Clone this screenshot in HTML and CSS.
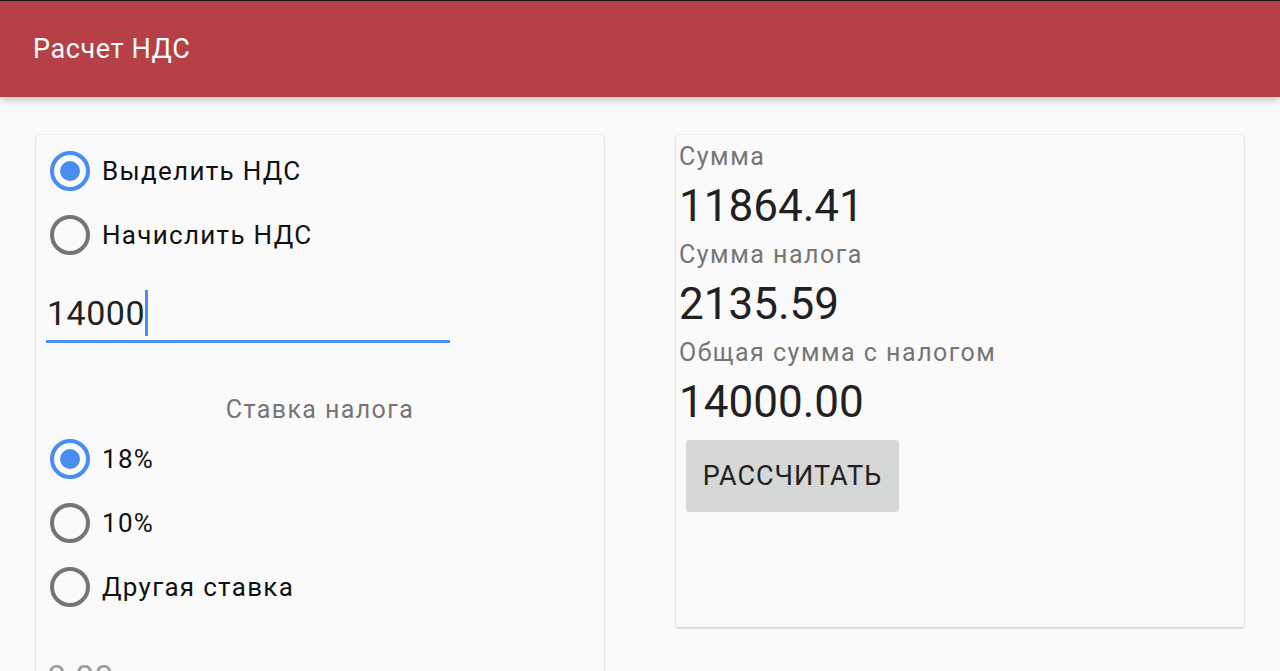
FILE: index.html
```html
<!DOCTYPE html>
<html lang="ru">
<head>
<meta charset="utf-8">
<title>Расчет НДС</title>
<link rel="stylesheet" href="styles.css">
</head>
<body>
<div class="topline"></div>
<header class="appbar"><h1 class="title">Расчет НДС</h1></header>
<main class="content">
  <section class="card left">
    <div class="radio-row"><span class="radio checked"></span><span class="radio-label">Выделить НДС</span></div>
    <div class="radio-row"><span class="radio"></span><span class="radio-label">Начислить НДС</span></div>
    <div class="field"><span class="field-text">14000</span><span class="cursor"></span></div>
    <div class="section-label">Ставка налога</div>
    <div class="radio-row"><span class="radio checked"></span><span class="radio-label">18%</span></div>
    <div class="radio-row"><span class="radio"></span><span class="radio-label">10%</span></div>
    <div class="radio-row"><span class="radio"></span><span class="radio-label">Другая ставка</span></div>
    <div class="other-rate">0.00</div>
  </section>
  <section class="card right">
    <div class="label">Сумма</div>
    <div class="value">11864.41</div>
    <div class="label">Сумма налога</div>
    <div class="value">2135.59</div>
    <div class="label">Общая сумма с налогом</div>
    <div class="value">14000.00</div>
    <button class="btn">РАССЧИТАТЬ</button>
  </section>
</main>
</body>
</html>
```
FILE: styles.css
```css
html, body { margin: 0; padding: 0; }
body {
  width: 1280px;
  height: 671px;
  overflow: hidden;
  background: #fafafa;
  font-family: Roboto, "Noto Sans", sans-serif;
  color: #212121;
}
.topline { height: 1px; background: #1a1a1a; }
.appbar {
  height: 96px;
  background: #b64047;
  display: flex;
  align-items: center;
  padding-left: 33px;
  box-shadow: 0 3px 8px rgba(0,0,0,0.22);
  position: relative;
  z-index: 1;
}
.title { margin: 0; font-weight: 400; font-size: 27px; letter-spacing: 0.6px; color: #fff; }
.content {
  display: flex;
  gap: 72px;
  padding: 38px 36px 0 36px;
  align-items: flex-start;
}
.card {
  width: 568px;
  background: #fafafa;
  border-radius: 3px;
  box-shadow: 0 1px 3px rgba(0,0,0,0.22), 0 0 1px rgba(0,0,0,0.12);
}
.left { height: 600px; padding-top: 4px; box-sizing: border-box; }
.radio-row {
  height: 64px;
  display: flex;
  align-items: center;
  padding-left: 14px;
}
.radio {
  width: 40px; height: 40px;
  box-sizing: border-box;
  border: 4px solid #757575;
  border-radius: 50%;
  display: flex; align-items: center; justify-content: center;
}
.radio.checked { border-color: #4a8df2; }
.radio.checked::after {
  content: "";
  width: 20px; height: 20px;
  border-radius: 50%;
  background: #4a8df2;
}
.radio-label { margin-left: 12px; font-size: 26px; letter-spacing: 1.3px; color: #111; }
.field {
  margin: 18px 0 0 10px;
  width: 404px;
  height: 55px;
  border-bottom: 3px solid #4a8df2;
  display: flex;
  align-items: center;
}
.field-text { font-size: 34px; letter-spacing: 0.5px; color: #222; margin-left: 1px; }
.cursor { width: 3px; height: 46px; background: #4a8df2; }
.section-label {
  text-align: center;
  font-size: 25px;
  letter-spacing: 1.4px;
  color: #757575;
  margin-top: 52px;
  margin-bottom: 3px;
}
.other-rate { margin: 38px 0 0 11px; font-size: 34px; color: #9e9e9e; }
.right { height: 492px; padding: 2px 3px 0 3px; box-sizing: border-box; }
.label { font-size: 25px; letter-spacing: 1.5px; color: #757575; line-height: 40px; }
.value { font-size: 44px; line-height: 58px; color: #212121; }
.btn {
  margin: 9px 0 0 7px;
  width: 213px;
  height: 72px;
  background: #d6d7d7;
  border: none;
  border-radius: 3px;
  font-family: Roboto, "Noto Sans", sans-serif;
  font-size: 27px;
  letter-spacing: 1px;
  color: #222;
  padding: 0;
}
```
